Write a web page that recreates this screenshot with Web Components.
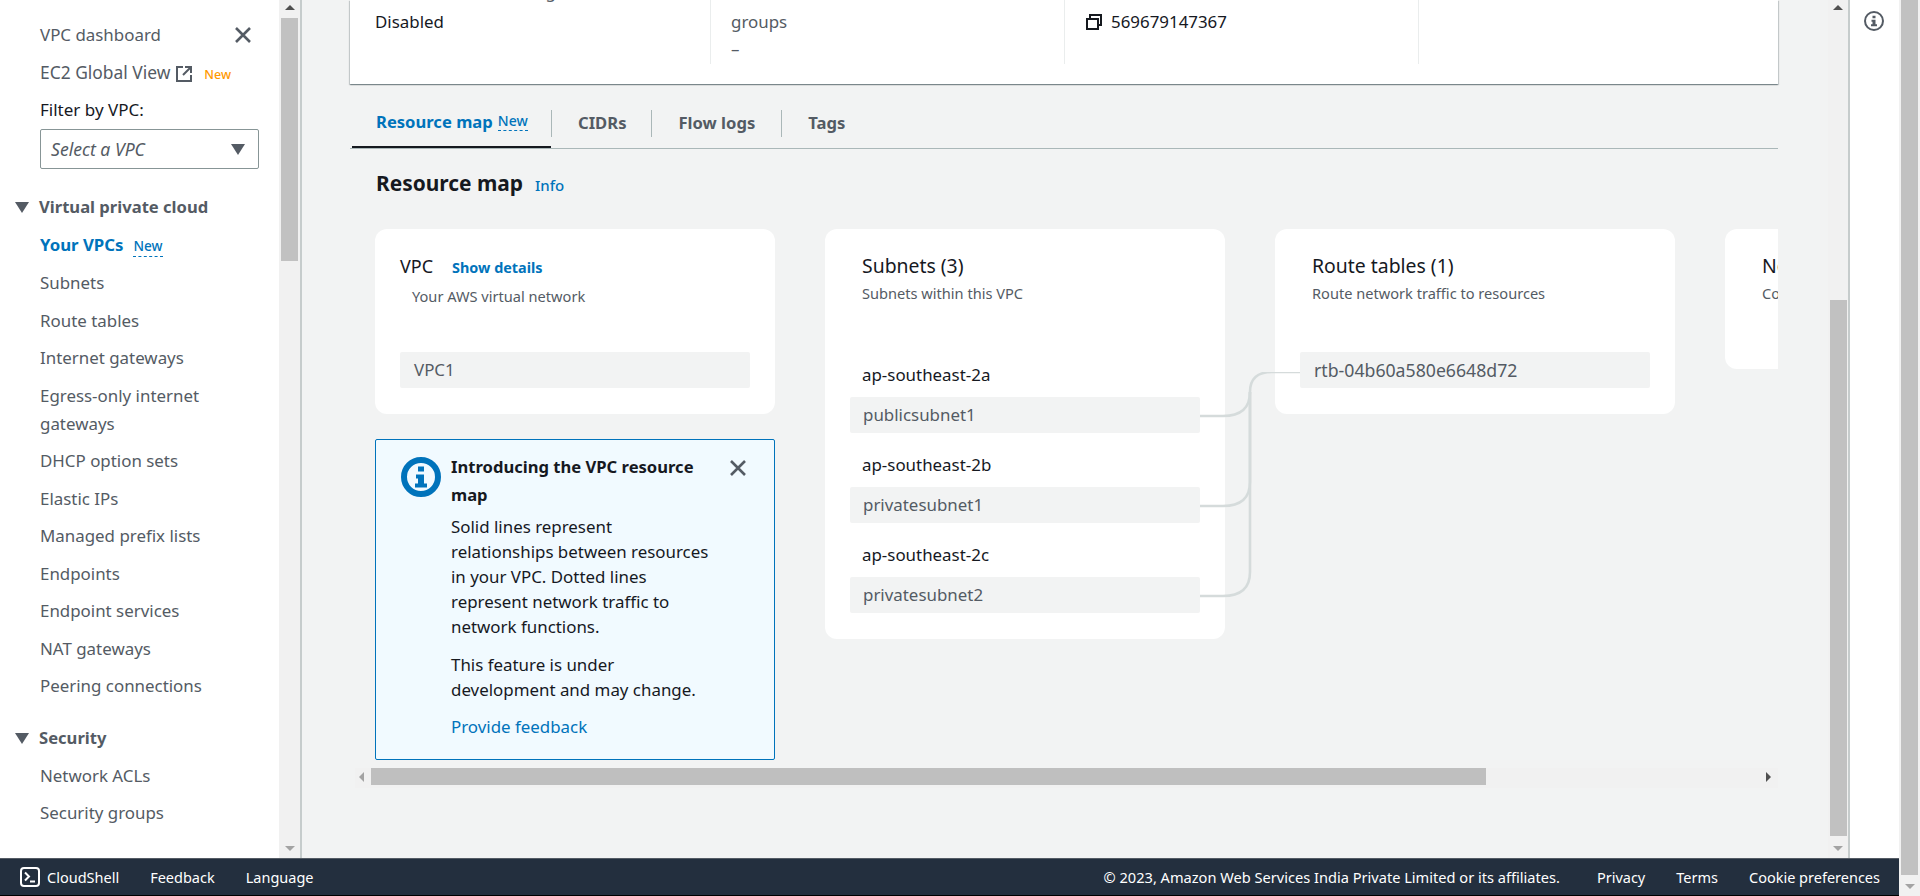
<!DOCTYPE html>
<html lang="en">
<head>
<meta charset="utf-8">
<title>VPC resource map</title>
<style>
  html, body { margin: 0; height: 100%; overflow: hidden; }
  body {
    font-family: "Noto Sans", "Liberation Sans", sans-serif;
    font-size: 16.9px;
    color: #16191f;
  }
</style>
</head>
<body>
<vpc-console>
  <console-sidebar slot="sidebar">
    <nav-link>VPC dashboard</nav-link>
    <nav-link external badge="New" badge-kind="orange">EC2 Global View</nav-link>
    <vpc-filter></vpc-filter>
    <nav-heading>Virtual private cloud</nav-heading>
    <nav-link active badge="New">Your VPCs</nav-link>
    <nav-link>Subnets</nav-link>
    <nav-link>Route tables</nav-link>
    <nav-link>Internet gateways</nav-link>
    <nav-link>Egress-only internet gateways</nav-link>
    <nav-link>DHCP option sets</nav-link>
    <nav-link>Elastic IPs</nav-link>
    <nav-link>Managed prefix lists</nav-link>
    <nav-link>Endpoints</nav-link>
    <nav-link>Endpoint services</nav-link>
    <nav-link>NAT gateways</nav-link>
    <nav-link>Peering connections</nav-link>
    <nav-heading>Security</nav-heading>
    <nav-link>Network ACLs</nav-link>
    <nav-link>Security groups</nav-link>
  </console-sidebar>

  <details-strip slot="main"></details-strip>
  <tab-bar slot="main"></tab-bar>
  <section-title slot="main">Resource map</section-title>
  <resource-map slot="main">
    <div class="col" slot="vpc">
      <map-card flush>
        <span slot="title" style="font-size:18px">VPC</span>
        <span slot="action">Show details</span>
        <span slot="sub">Your AWS virtual network</span>
        <map-entry first>VPC1</map-entry>
      </map-card>
      <info-flash></info-flash>
    </div>
    <map-card slot="subnets">
      <span slot="title">Subnets (3)</span>
      <span slot="sub">Subnets within this VPC</span>
      <map-entry zone="ap-southeast-2a">publicsubnet1</map-entry>
      <map-entry zone="ap-southeast-2b">privatesubnet1</map-entry>
      <map-entry zone="ap-southeast-2c">privatesubnet2</map-entry>
    </map-card>
    <map-card slot="routes">
      <span slot="title">Route tables (1)</span>
      <span slot="sub">Route network traffic to resources</span>
      <map-entry first style="font-size:17.700px">rtb-04b60a580e6648d72</map-entry>
    </map-card>
    <map-card slot="network" short>
      <span slot="title">Network connections (2)</span>
      <span slot="sub">Connections to other networks</span>
    </map-card>
  </resource-map>
  <fake-scroll slot="main" orient="h" start="16" size="1115"></fake-scroll>

  <fake-scroll slot="mainbar" orient="v" start="300" size="536" style="--thumb-right:1px"></fake-scroll>
  <help-rail slot="rail"></help-rail>
  <console-footer slot="footer"></console-footer>
  <fake-scroll slot="pagebar" orient="v" start="0" size="875"></fake-scroll>
</vpc-console>

<script>
const tri = (dir, w, h, color) => {
  let pts = {
    up: `0,${h} ${w},${h} ${w / 2},0`,
    down: `0,0 ${w},0 ${w / 2},${h}`,
    left: `${w},0 ${w},${h} 0,${h / 2}`,
    right: `0,0 0,${h} ${w},${h / 2}`
  }[dir];
  return `<svg width="${w}" height="${h}" viewBox="0 0 ${w} ${h}" style="display:block;flex:none"><polygon points="${pts}" fill="${color}"/></svg>`;
};

const closeIcon = `<svg width="20" height="20" viewBox="0 0 20 20" fill="none" stroke="#545b64" stroke-width="2.6" style="display:block"><path d="M3 3l14 14M17 3L3 17"/></svg>`;

const infoIcon = (size, color, stroke) => `<svg width="${size}" height="${size}" viewBox="0 0 40 40" style="display:block;flex:none"><circle cx="20" cy="20" r="${20 - stroke / 2}" fill="none" stroke="${color}" stroke-width="${stroke}"/><path fill="${color}" d="M17 9.500h6v5h-6zM15 17.500h8v9h3v4H14v-4h3v-5h-2z"/></svg>`;

class VpcConsole extends HTMLElement {
  connectedCallback() {
    this.attachShadow({ mode: "open" });
    this.shadowRoot.innerHTML = `
      <style>
        :host { display: flex; width: 1920px; height: 896px; overflow: hidden; }
        .app { width: 1899px; display: flex; flex-direction: column; }
        .body { display: flex; height: 858px; }
        .main { flex: 1; min-width: 0; display: flex; background: #f2f3f3; border-left: 2px solid #c6cccc; }
        .page { width: 1428px; margin-left: 48px; height: 858px; display: flex; flex-direction: column; }
        .mainbar { margin-left: 50px; width: 20px; }
        .pagebar { width: 21px; }
      </style>
      <div class="app">
        <div class="body">
          <slot name="sidebar"></slot>
          <div class="main">
            <div class="page"><slot name="main"></slot></div>
            <div class="mainbar"><slot name="mainbar"></slot></div>
          </div>
          <slot name="rail"></slot>
        </div>
        <slot name="footer"></slot>
      </div>
      <div class="pagebar"><slot name="pagebar"></slot></div>
    `;
  }
}

class ConsoleSidebar extends HTMLElement {
  connectedCallback() {
    this.attachShadow({ mode: "open" });
    this.shadowRoot.innerHTML = `
      <style>
        :host { display: flex; width: 300px; height: 858px; flex: none; background: #fff; }
        .scroll { width: 279px; padding: 21px 0 0 40px; box-sizing: border-box; position: relative; overflow: hidden; }
        .close { position: absolute; left: 233px; top: 25px; }
        fake-scroll { width: 21px; height: 858px; }
      </style>
      <div class="scroll">
        <div class="close">${closeIcon}</div>
        <slot></slot>
      </div>
      <fake-scroll orient="v" start="18" size="243"></fake-scroll>
    `;
  }
}

class NavLink extends HTMLElement {
  connectedCallback() {
    let badge = this.getAttribute("badge");
    let orange = this.getAttribute("badge-kind") === "orange";
    let external = this.hasAttribute("external");
    this.attachShadow({ mode: "open" });
    this.shadowRoot.innerHTML = `
      <style>
        :host { display: block; width: 200px; line-height: 28px; margin-bottom: 9.500px; color: #545b64; white-space: normal; }
        :host([active]) { color: #0073bb; font-weight: 700; font-size: 16.800px; width: 240px; }
        .badge { font-size: 13.600px; font-weight: 500; margin-left: 10px; color: #0073bb; border-bottom: 1px dashed #0073bb; padding-bottom: 1px; }
        .badge.orange { color: #ff9900; border: 0; margin-left: 12px; font-size: 12.500px; }
        svg { vertical-align: -3px; margin-left: 6px; }
        :host([external]) { width: 240px; white-space: nowrap; font-size: 17.400px; margin-top: -1px; margin-bottom: 10.500px; }
      </style>
      <slot></slot>${external ? `<svg width="16" height="16" viewBox="0 0 16 16" fill="none" stroke="#545b64" stroke-width="2"><path d="M7 1H1v14h14V9M9 1h6v6M15 1L7 9"/></svg>` : ""}${badge ? `<span class="badge ${orange ? "orange" : ""}">${badge}</span>` : ""}
    `;
  }
}

class NavHeading extends HTMLElement {
  connectedCallback() {
    this.attachShadow({ mode: "open" });
    this.shadowRoot.innerHTML = `
      <style>
        :host { display: flex; align-items: center; margin: 24px 0 9.500px -25px; line-height: 28px; font-size: 16.600px; font-weight: 700; color: #545b64; }
        svg { margin-right: 10px; }
      </style>
      ${tri("down", 14, 11, "#545b64")}<slot></slot>
    `;
  }
}

class VpcFilter extends HTMLElement {
  connectedCallback() {
    this.attachShadow({ mode: "open" });
    this.shadowRoot.innerHTML = `
      <style>
        :host { display: block; width: 219px; margin: 1px 0; }
        label { display: block; line-height: 22px; margin-bottom: 8px; font-size: 17px; }
        .box { height: 40px; box-sizing: border-box; border: 1px solid #879596; border-radius: 2px; display: flex; align-items: center; justify-content: space-between; padding: 0 13px 0 10px; font-size: 17.600px; font-style: italic; color: #545b64; }
      </style>
      <label>Filter by VPC:</label>
      <div class="box"><span>Select a VPC</span>${tri("down", 14, 11, "#545b64")}</div>
    `;
  }
}

class DetailsStrip extends HTMLElement {
  connectedCallback() {
    this.attachShadow({ mode: "open" });
    this.shadowRoot.innerHTML = `
      <style>
        :host { display: block; height: 84px; flex: none; background: #fff; box-shadow: 0 1px 1px 0 rgba(0,28,36,.3), 1px 1px 1px 0 rgba(0,28,36,.15), -1px 1px 1px 0 rgba(0,28,36,.15); position: relative; }
        .inner { display: flex; height: 64px; overflow: hidden; }
        .cell { flex: none; height: 64px; border-right: 1px solid #eaeded; line-height: 25px; white-space: nowrap; overflow: hidden; }
        .cell > div:first-child { margin-top: -21px; margin-bottom: 5px; }
        .a { width: 335px; padding-left: 25px; }
        .b { width: 333px; padding-left: 20px; }
        .c { width: 333px; padding-left: 20px; }
        .lab { color: #545b64; }
        .val { line-height: 30px; }
        .cp { display: flex; align-items: center; gap: 8px; }
      </style>
      <div class="inner">
        <div class="cell a"><div class="lab">Network Address Usage metrics</div><div>Disabled</div></div>
        <div class="cell b"><div class="lab">Route 53 Resolver DNS Firewall rule</div><div class="lab">groups</div><div class="lab val">&ndash;</div></div>
        <div class="cell c"><div class="lab">Owner ID</div><div class="cp"><svg width="18" height="18" viewBox="0 0 18 18" fill="none" stroke="#16191f" stroke-width="2" style="flex:none"><path d="M5 5V2h11v10h-3M2 6h11v10H2z"/></svg><span>569679147367</span></div></div>
      </div>
    `;
  }
}

class TabBar extends HTMLElement {
  connectedCallback() {
    this.attachShadow({ mode: "open" });
    this.shadowRoot.innerHTML = `
      <style>
        :host { display: flex; height: 65px; flex: none; box-sizing: border-box; border-bottom: 1px solid #aab7b8; align-items: flex-end; padding-left: 2px; font-size: 16.600px; font-weight: 700; color: #545b64; }
        .tab { height: 38px; box-sizing: border-box; padding: 0 26px 0 27px; display: flex; align-items: center; line-height: 28px; position: relative; }
        .sep { position: absolute; left: 0; top: 0; height: 27px; width: 1px; background: #aab7b8; }
        .on { color: #0073bb; border-bottom: 2px solid #16191f; width: 199px; padding: 0 0 0 24px; }
        .new { font-size: 14px; margin-left: 5px; border-bottom: 1px dashed #0073bb; line-height: 18px; font-weight: 500; }
        .lbl { margin-top: -13px; display: flex; align-items: center; white-space: nowrap; }
      </style>
      <div class="tab on"><span class="lbl">Resource map<span class="new">New</span></span></div>
      <div class="tab" style="padding-right:25px"><span class="sep"></span><span class="lbl">CIDRs</span></div>
      <div class="tab"><span class="sep"></span><span class="lbl">Flow logs</span></div>
      <div class="tab"><span class="sep"></span><span class="lbl">Tags</span></div>
    `;
  }
}

class SectionTitle extends HTMLElement {
  connectedCallback() {
    this.attachShadow({ mode: "open" });
    this.shadowRoot.innerHTML = `
      <style>
        :host { display: flex; align-items: baseline; height: 80px; flex: none; box-sizing: border-box; padding: 19px 0 0 26px; }
        h2 { margin: 0; font-size: 20.900px; line-height: 30px; font-weight: 700; color: #16191f; }
        a { margin-left: 12px; font-size: 15px; font-weight: 500; color: #0073bb; }
      </style>
      <h2><slot></slot></h2><a>Info</a>
    `;
  }
}

class ResourceMap extends HTMLElement {
  connectedCallback() {
    this.attachShadow({ mode: "open" });
    this.shadowRoot.innerHTML = `
      <style>
        :host { display: block; height: 539px; flex: none; overflow: hidden; position: relative; }
        .row { display: flex; gap: 50px; padding-left: 25px; align-items: flex-start; width: 2000px; }
        ::slotted(.col) { display: flex; flex-direction: column; gap: 25px; }
        svg { position: absolute; left: 850px; top: 143px; }
      </style>
      <div class="row">
        <slot name="vpc"></slot>
        <slot name="subnets"></slot>
        <slot name="routes"></slot>
        <slot name="network"></slot>
      </div>
      <svg width="100" height="240" viewBox="0 0 100 240" fill="none" stroke="#d5dbdb" stroke-width="2.600">
        <path d="M0 44H23Q50 44 50 20Q50 0 72 0H100"/>
        <path d="M0 134H23Q50 134 50 110V20"/>
        <path d="M0 224H23Q50 224 50 200V20"/>
      </svg>
    `;
  }
}

class MapCard extends HTMLElement {
  connectedCallback() {
    this.attachShadow({ mode: "open" });
    this.shadowRoot.innerHTML = `
      <style>
        :host { display: block; width: 400px; flex: none; box-sizing: border-box; background: #fff; border-radius: 12px; padding: 24px 25px 26px; }
        :host([short]) { height: 140px; }
        .head { display: flex; align-items: baseline; height: 26px; padding-left: 12px; font-size: 19.400px; line-height: 26px; color: #16191f; white-space: nowrap; }
        :host([flush]) .head { padding-left: 0; }
        ::slotted([slot="action"]) { margin-left: 19px; font-size: 14.400px; font-weight: 700; color: #0073bb; }
        .sub { height: 20px; padding-left: 12px; margin-top: 4px; font-size: 14.600px; line-height: 20px; color: #545b64; white-space: nowrap; }
        :host([flush]) .sub { position: relative; top: 3px; }
      </style>
      <div class="head"><slot name="title"></slot><slot name="action"></slot></div>
      <div class="sub"><slot name="sub"></slot></div>
      <slot></slot>
    `;
  }
}

class MapEntry extends HTMLElement {
  connectedCallback() {
    let zone = this.getAttribute("zone");
    this.attachShadow({ mode: "open" });
    this.shadowRoot.innerHTML = `
      <style>
        :host { display: block; margin-top: 19px; }
        :host(:first-of-type) { margin-top: 59px; }
        :host([first]) { margin-top: 49px; }
        .zone { padding-left: 12px; line-height: 26px; margin-bottom: 9px; color: #16191f; }
        .box { height: 36px; border-radius: 2px; background: #f2f3f3; padding-left: 13px; line-height: 36px; color: #545b64; white-space: nowrap; }
        :host([first]) .box { padding-left: 14px; }
      </style>
      ${zone ? `<div class="zone">${zone}</div>` : ""}
      <div class="box"><slot></slot></div>
    `;
  }
}

class InfoFlash extends HTMLElement {
  connectedCallback() {
    this.attachShadow({ mode: "open" });
    this.shadowRoot.innerHTML = `
      <style>
        :host { display: flex; width: 400px; height: 321px; box-sizing: border-box; background: #f1faff; border: 1px solid #0073bb; border-radius: 2px; padding: 17px 0 0 25px; color: #16191f; line-height: 25px; }
        .txt { width: 265px; margin-left: 10px; margin-top: -4px; flex: none; }
        b { display: block; line-height: 28px; margin-bottom: 5px; font-size: 16.600px; }
        p { margin: 0 0 12.500px; }
        a { color: #0073bb; }
        .x { margin: 1px 0 0 12px; }
      </style>
      ${infoIcon(40, "#0073bb", 6)}
      <div class="txt">
        <b>Introducing the VPC resource map</b>
        <p>Solid lines represent relationships between resources in your VPC. Dotted lines represent network traffic to network functions.</p>
        <p>This feature is under development and may change.</p>
        <a>Provide feedback</a>
      </div>
      <div class="x">${closeIcon}</div>
    `;
  }
}

// stand-in for the browser's own scrollbars in the screenshot
class FakeScroll extends HTMLElement {
  connectedCallback() {
    let h = this.getAttribute("orient") === "h";
    let start = this.getAttribute("start");
    let size = this.getAttribute("size");
    this.attachShadow({ mode: "open" });
    if (h) {
      this.shadowRoot.innerHTML = `
        <style>
          :host { display: flex; align-items: center; height: 20px; width: 1423px; margin-left: 5px; flex: none; background: #f1f1f1; position: relative; }
          .t { position: absolute; top: 0; height: 17px; left: ${start}px; width: ${size}px; background: #bfbfbf; }
          .a { position: absolute; left: 4px; top: 4px; }
          .b { position: absolute; right: 7px; top: 4px; }
        </style>
        <div class="a">${tri("left", 5, 10, "#a3a3a3")}</div>
        <div class="t"></div>
        <div class="b">${tri("right", 5, 10, "#505050")}</div>
      `;
    } else {
      this.shadowRoot.innerHTML = `
        <style>
          :host { display: block; position: relative; height: 100%; width: 100%; background: #f1f1f1; }
          .t { position: absolute; left: 2px; right: var(--thumb-right, 2px); top: ${start}px; height: ${size}px; background: #c1c1c1; }
          .a { position: absolute; left: 50%; margin-left: -5px; top: 5px; }
          .b { position: absolute; left: 50%; margin-left: -5px; bottom: 7px; }
        </style>
        <div class="a">${tri("up", 10, 5, "#505050")}</div>
        <div class="t"></div>
        <div class="b">${tri("down", 10, 5, "#a3a3a3")}</div>
      `;
    }
  }
}

class HelpRail extends HTMLElement {
  connectedCallback() {
    this.attachShadow({ mode: "open" });
    this.shadowRoot.innerHTML = `
      <style>
        :host { display: block; width: 51px; flex: none; box-sizing: border-box; background: #fff; border-left: 2px solid #c6cccc; padding: 11px 0 0 14px; }
      </style>
      ${infoIcon(20, "#545b64", 4)}
    `;
  }
}

class ConsoleFooter extends HTMLElement {
  connectedCallback() {
    this.attachShadow({ mode: "open" });
    this.shadowRoot.innerHTML = `
      <style>
        :host { display: flex; height: 38px; flex: none; box-sizing: border-box; align-items: center; background: #232f3e; border-top: 1px solid #545b64; border-bottom: 1px solid #000; color: #fff; font-size: 14.500px; padding: 0 19px 0 20px; white-space: nowrap; }
        .shell { display: flex; align-items: center; gap: 7px; margin-right: 31px; }
        .l { margin-right: 31px; }
        .copy { margin-left: auto; margin-right: 37px; font-size: 14.600px; }
        .r { margin-right: 31px; }
        .r:last-child { margin-right: 0; }
      </style>
      <span class="shell"><svg width="20" height="20" viewBox="0 0 20 20" fill="none" stroke="#fff" stroke-width="2"><rect x="1" y="1" width="18" height="18" rx="3"/><path d="M5 5.500l4 4-4 4M10 14.500h5"/></svg>CloudShell</span>
      <span class="l">Feedback</span>
      <span class="l">Language</span>
      <span class="copy">&copy; 2023, Amazon Web Services India Private Limited or its affiliates.</span>
      <span class="r">Privacy</span>
      <span class="r">Terms</span>
      <span class="r">Cookie preferences</span>
    `;
  }
}

customElements.define("vpc-console", VpcConsole);
customElements.define("console-sidebar", ConsoleSidebar);
customElements.define("nav-link", NavLink);
customElements.define("nav-heading", NavHeading);
customElements.define("vpc-filter", VpcFilter);
customElements.define("details-strip", DetailsStrip);
customElements.define("tab-bar", TabBar);
customElements.define("section-title", SectionTitle);
customElements.define("resource-map", ResourceMap);
customElements.define("map-card", MapCard);
customElements.define("map-entry", MapEntry);
customElements.define("info-flash", InfoFlash);
customElements.define("fake-scroll", FakeScroll);
customElements.define("help-rail", HelpRail);
customElements.define("console-footer", ConsoleFooter);
</script>
</body>
</html>
